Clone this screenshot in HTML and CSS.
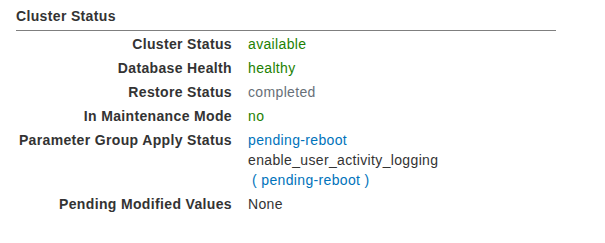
FILE: index.html
```html
<!DOCTYPE html>
<html lang="en">
<head>
    <meta charset="UTF-8">
    <meta name="viewport" content="width=device-width, initial-scale=1.0">
    <title>Cluster Status</title>
    <link rel="stylesheet" href="styles.css">
</head>
<body>
    <div class="panel">
        <h3 class="panel-title">Cluster Status</h3>
        <div class="details">
            <div class="row">
                <div class="label">Cluster Status</div>
                <div class="value ok">available</div>
            </div>
            <div class="row">
                <div class="label">Database Health</div>
                <div class="value ok">healthy</div>
            </div>
            <div class="row">
                <div class="label">Restore Status</div>
                <div class="value muted">completed</div>
            </div>
            <div class="row">
                <div class="label">In Maintenance Mode</div>
                <div class="value ok">no</div>
            </div>
            <div class="row">
                <div class="label">Parameter Group Apply Status</div>
                <div class="value">
                    <div class="link">pending-reboot</div>
                    <div>enable_user_activity_logging</div>
                    <div class="paren">( <span class="link">pending-reboot</span> )</div>
                </div>
            </div>
            <div class="row">
                <div class="label">Pending Modified Values</div>
                <div class="value">None</div>
            </div>
        </div>
    </div>
</body>
</html>
```

FILE: styles.css
```css
body {
    margin: 0;
    font-family: "Liberation Sans", Arial, sans-serif;
    font-size: 14px;
    line-height: 20px;
    letter-spacing: 0.35px;
    color: #333;
    background-color: #fff;
}
.panel {
    width: 540px;
    padding: 6px 0 0 16px;
}
.panel-title {
    margin: 0;
    font-size: 14px;
    font-weight: bold;
    color: #333;
    padding-bottom: 4px;
    border-bottom: 1px solid #7f7f7f;
}
.details {
    padding-top: 1px;
}
.row {
    display: grid;
    grid-template-columns: 216px 1fr;
    column-gap: 16px;
    padding: 2px 0;
}
.label {
    text-align: right;
    font-weight: bold;
    color: #333;
}
.value {
    color: #333;
}
.ok {
    color: #1d8102;
}
.muted {
    color: #687078;
}
.link {
    color: #0073bb;
}
.paren {
    padding-left: 4px;
    color: #0073bb;
}
```
